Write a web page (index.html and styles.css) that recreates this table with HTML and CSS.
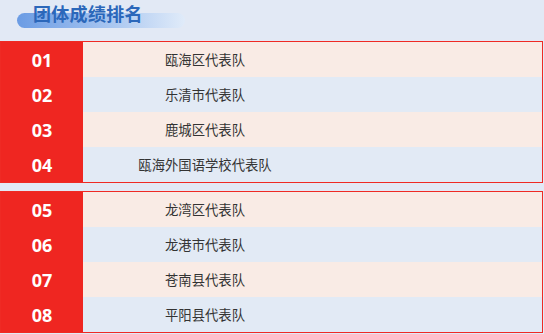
FILE: index.html
```html
<!DOCTYPE html>
<html lang="zh">
<head>
<meta charset="utf-8">
<link rel="stylesheet" href="styles.css">
</head>
<body>
<div class="header">
  <h2 class="title"><span class="title-text">团体成绩排名</span></h2>
</div>
<div class="group">
  <div class="row odd"><div class="num">01</div><div class="name">瓯海区代表队</div><div class="rest"></div></div>
  <div class="row even"><div class="num">02</div><div class="name">乐清市代表队</div><div class="rest"></div></div>
  <div class="row odd"><div class="num">03</div><div class="name">鹿城区代表队</div><div class="rest"></div></div>
  <div class="row even"><div class="num">04</div><div class="name">瓯海外国语学校代表队</div><div class="rest"></div></div>
</div>
<div class="group">
  <div class="row odd"><div class="num">05</div><div class="name">龙湾区代表队</div><div class="rest"></div></div>
  <div class="row even"><div class="num">06</div><div class="name">龙港市代表队</div><div class="rest"></div></div>
  <div class="row odd"><div class="num">07</div><div class="name">苍南县代表队</div><div class="rest"></div></div>
  <div class="row even"><div class="num">08</div><div class="name">平阳县代表队</div><div class="rest"></div></div>
</div>
</body>
</html>
```
FILE: styles.css
```css
* { box-sizing: border-box; }
html, body { margin: 0; padding: 0; }
body {
  background: #e2e9f5;
  font-family: "Noto Sans CJK SC", "Noto Sans", sans-serif;
  width: 544px;
}
.header {
  height: 41px;
  padding-left: 17px;
}
.title {
  margin: 0;
  display: inline-block;
  position: relative;
  width: 168px;
  height: 41px;
  padding-left: 16px;
  font-size: 18px;
  font-weight: 700;
  line-height: 26px;
  color: #2b67ba;
}
.title::before {
  content: "";
  position: absolute;
  left: 0;
  top: 13px;
  width: 168px;
  height: 15px;
  border-radius: 8px;
  background: linear-gradient(90deg, #6b9ce4 0%, #9bbdee 45%, #e0ebf9 100%);
}
.title-text {
  position: relative;
  letter-spacing: 0.3px;
}
.group {
  width: 543px;
  border: 1px solid #ef2a24;
  margin-bottom: 8px;
}
.row {
  display: flex;
  height: 35px;
  align-items: stretch;
}
.row.odd { background: #f9ebe5; }
.row.even { background: #e2eaf5; }
.num {
  width: 82px;
  background: #ef2621;
  color: #fff;
  font-family: "Noto Sans", "Open Sans", sans-serif;
  font-weight: 700;
  font-size: 18px;
  display: flex;
  align-items: center;
  justify-content: center;
}
.name {
  width: 244px;
  display: flex;
  align-items: center;
  justify-content: center;
  font-size: 13.33px;
  color: #333;
}
.rest { flex: 1; }
```
